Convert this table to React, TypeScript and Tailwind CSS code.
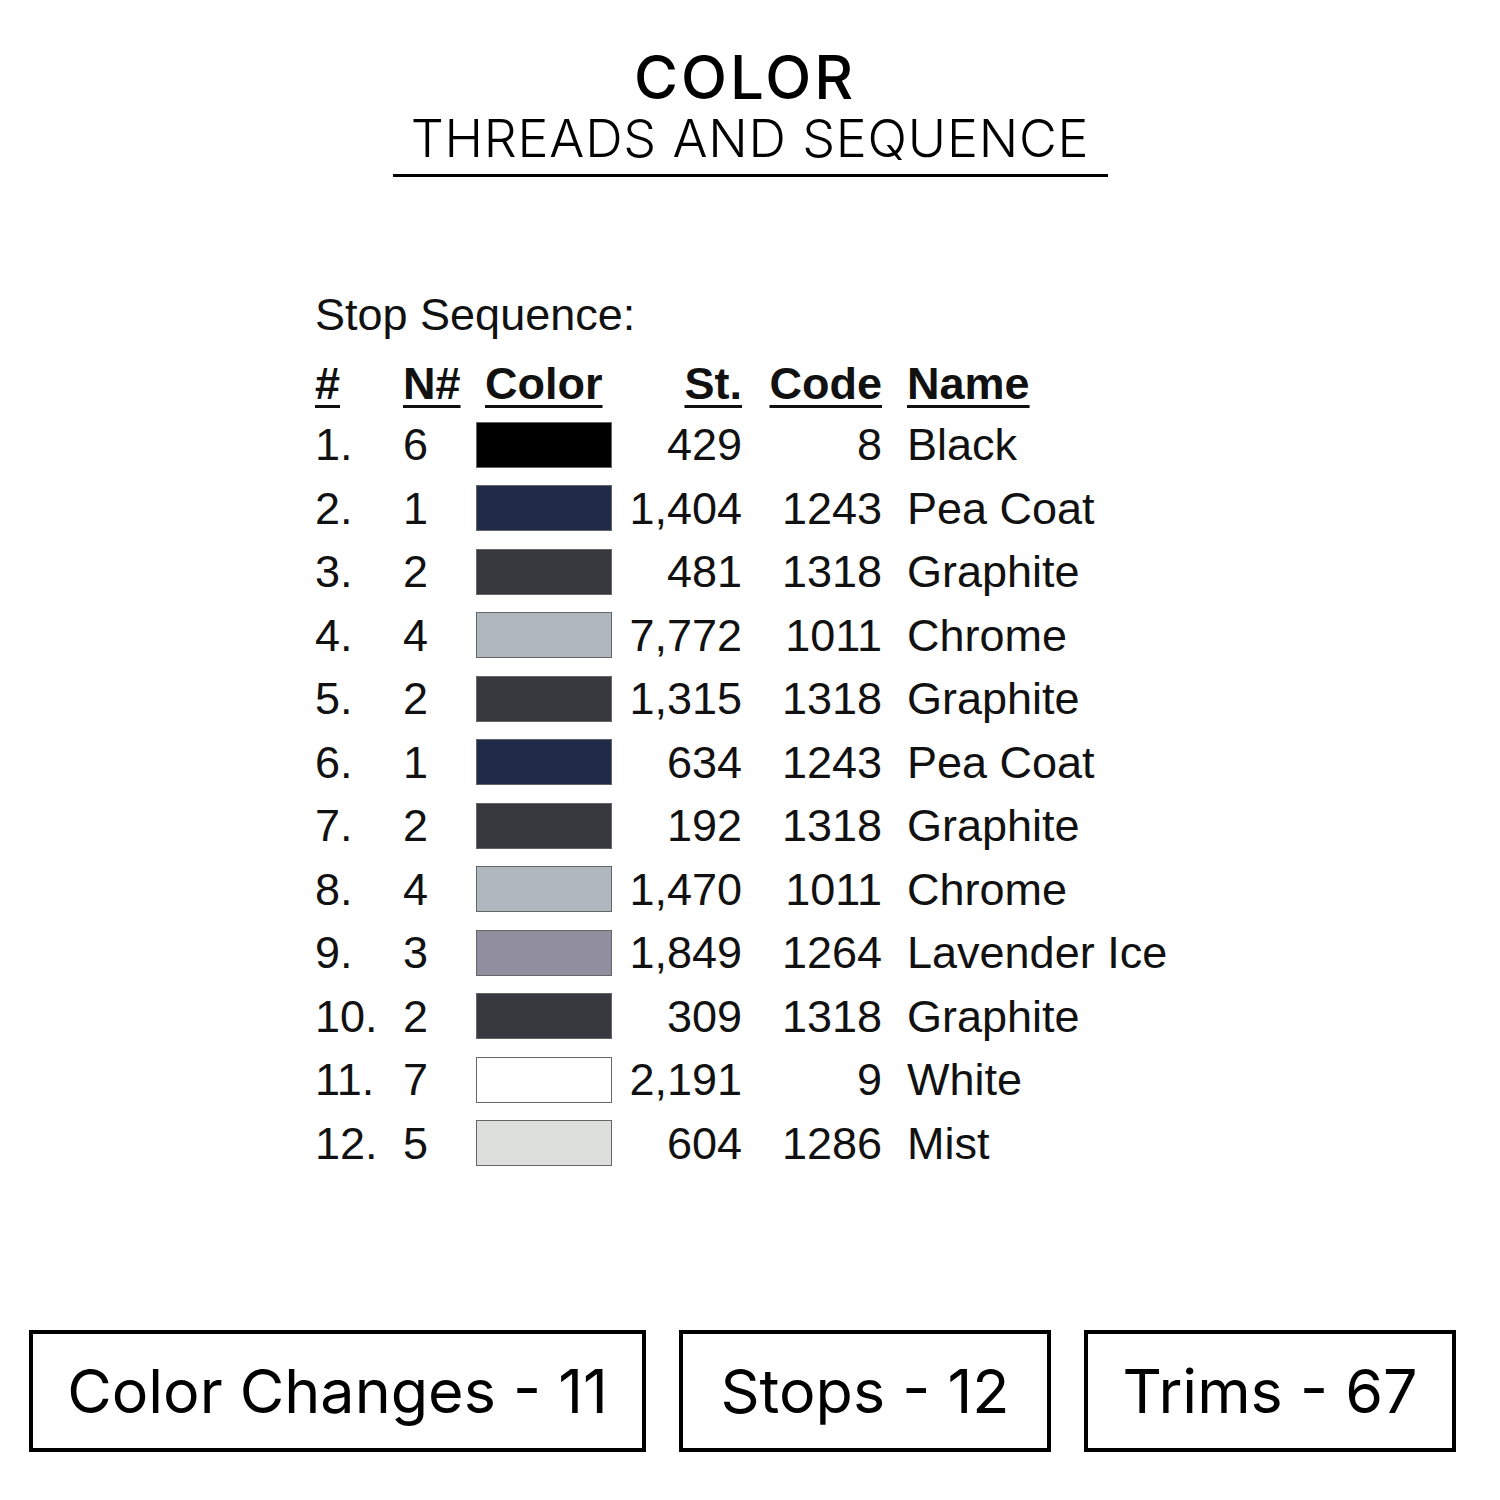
const rows = [
  { n: "1.", needle: "6", color: "#000000", st: "429", code: "8", name: "Black" },
  { n: "2.", needle: "1", color: "#1f2b47", st: "1,404", code: "1243", name: "Pea Coat" },
  { n: "3.", needle: "2", color: "#38383f", st: "481", code: "1318", name: "Graphite" },
  { n: "4.", needle: "4", color: "#b0b8bf", st: "7,772", code: "1011", name: "Chrome" },
  { n: "5.", needle: "2", color: "#38383f", st: "1,315", code: "1318", name: "Graphite" },
  { n: "6.", needle: "1", color: "#1f2b47", st: "634", code: "1243", name: "Pea Coat" },
  { n: "7.", needle: "2", color: "#38383f", st: "192", code: "1318", name: "Graphite" },
  { n: "8.", needle: "4", color: "#b0b8bf", st: "1,470", code: "1011", name: "Chrome" },
  { n: "9.", needle: "3", color: "#918ea0", st: "1,849", code: "1264", name: "Lavender Ice" },
  { n: "10.", needle: "2", color: "#38383f", st: "309", code: "1318", name: "Graphite" },
  { n: "11.", needle: "7", color: "#ffffff", st: "2,191", code: "9", name: "White" },
  { n: "12.", needle: "5", color: "#dcdfdc", st: "604", code: "1286", name: "Mist" },
];

const totals = [
  { label: "Color Changes - 11", w: "w-[617px]" },
  { label: "Stops - 12", w: "w-[372px]" },
  { label: "Trims - 67", w: "w-[372px]" },
];

const cols = "grid grid-cols-[88px_73px_136px_130px_140px_auto] items-center";
const ul = "underline decoration-[3px] underline-offset-[6px]";

export default function App() {
  return (
    <div className="w-[1500px] h-[1500px] bg-white text-black flex flex-col">
      {/* Title */}
      <div className="flex flex-col items-center pt-[47px] font-['Inter',sans-serif]">
        <div className="text-[60px] leading-none font-medium tracking-[3px] mr-[10px]">COLOR</div>
        <div className="mt-[6px] text-[52px] leading-none font-light tracking-[0.8px]">THREADS AND SEQUENCE</div>
        <div className="mt-[9px] w-[715px] h-[3px] bg-black" />
      </div>

      {/* Stop sequence table */}
      <div className="pl-[315px] pt-[115px] font-['Liberation_Sans',Arial,sans-serif] text-[45px] text-[#111]">
        <div className="leading-none">Stop Sequence:</div>
        <div className="mt-[13px]">
          <div className={`${cols} h-[61px] font-bold`}>
            <span className={ul}>#</span>
            <span className={ul}>N#</span>
            <span className="pl-[9px]"><span className={ul}>Color</span></span>
            <span className="text-right"><span className={ul}>St.</span></span>
            <span className="text-right"><span className={ul}>Code</span></span>
            <span className="pl-[25px]"><span className={ul}>Name</span></span>
          </div>
          {rows.map((r) => (
            <div key={r.n} className={`${cols} h-[63.5px]`}>
              <span>{r.n}</span>
              <span>{r.needle}</span>
              <span className="h-[46px] border border-[#666]" style={{ background: r.color }} />
              <span className="text-right">{r.st}</span>
              <span className="text-right">{r.code}</span>
              <span className="pl-[25px]">{r.name}</span>
            </div>
          ))}
        </div>
      </div>

      {/* Totals */}
      <div className="mt-[157px] pl-[29px] flex gap-[33px] font-['Inter',sans-serif]">
        {totals.map((t) => (
          <div key={t.label} className={`${t.w} h-[122px] border-4 border-black flex items-center justify-center text-[61px] leading-none`}>
            {t.label}
          </div>
        ))}
      </div>
    </div>
  );
}
